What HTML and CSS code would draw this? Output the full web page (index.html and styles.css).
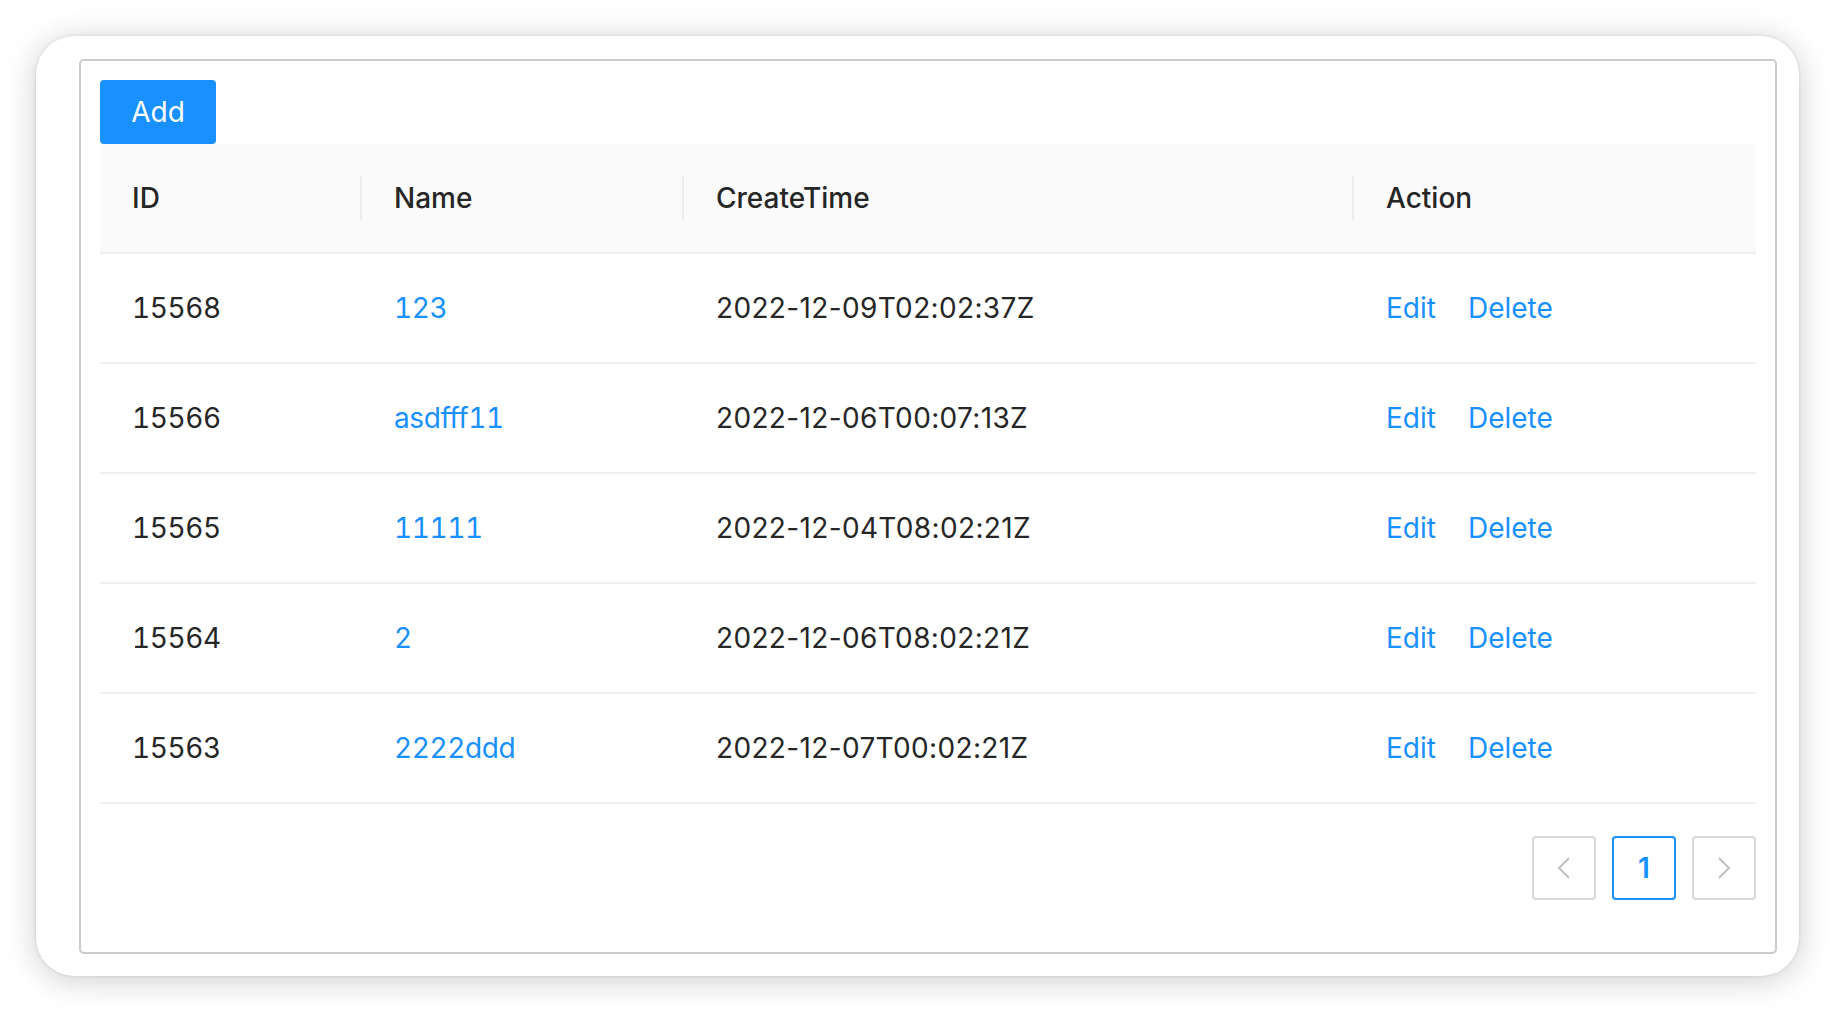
FILE: index.html
```html
<!DOCTYPE html>
<html>
<head>
<meta charset="utf-8">
<link rel="stylesheet" href="styles.css">
</head>
<body>
<div class="window">
  <div class="panel">
    <button class="btn-primary">Add</button>
    <table class="table">
      <colgroup>
        <col class="c-id"><col class="c-name"><col class="c-time"><col class="c-action">
      </colgroup>
      <thead>
        <tr><th>ID</th><th>Name</th><th>CreateTime</th><th>Action</th></tr>
      </thead>
      <tbody>
        <tr><td class="tnum">15568</td><td><a class="link tnum">123</a></td><td class="date">2022-12-09T02:02:37Z</td><td><span class="actions"><a class="link">Edit</a><a class="link">Delete</a></span></td></tr>
        <tr><td class="tnum">15566</td><td><a class="link tnum">asdfff11</a></td><td class="date">2022-12-06T00:07:13Z</td><td><span class="actions"><a class="link">Edit</a><a class="link">Delete</a></span></td></tr>
        <tr><td class="tnum">15565</td><td><a class="link tnum">11111</a></td><td class="date">2022-12-04T08:02:21Z</td><td><span class="actions"><a class="link">Edit</a><a class="link">Delete</a></span></td></tr>
        <tr><td class="tnum">15564</td><td><a class="link tnum">2</a></td><td class="date">2022-12-06T08:02:21Z</td><td><span class="actions"><a class="link">Edit</a><a class="link">Delete</a></span></td></tr>
        <tr><td class="tnum">15563</td><td><a class="link tnum">2222ddd</a></td><td class="date">2022-12-07T00:02:21Z</td><td><span class="actions"><a class="link">Edit</a><a class="link">Delete</a></span></td></tr>
      </tbody>
    </table>
    <div class="pagination">
      <span class="page-item disabled">
        <svg width="14" height="22" viewBox="0 0 14 22"><path d="M12 1 L2 11 L12 21" fill="none" stroke="#bfbfbf" stroke-width="2"/></svg>
      </span>
      <span class="page-item active">1</span>
      <span class="page-item disabled">
        <svg width="14" height="22" viewBox="0 0 14 22"><path d="M2 1 L12 11 L2 21" fill="none" stroke="#bfbfbf" stroke-width="2"/></svg>
      </span>
    </div>
  </div>
</div>
</body>
</html>
```
FILE: styles.css
```css
html, body {
  margin: 0;
  padding: 0;
  background: #ffffff;
}
body {
  font-family: Inter, "Noto Sans", "Liberation Sans", sans-serif;
  color: #262626;
  font-size: 28px;
  padding: 36px 0 36px 36px;
}
.window {
  width: 1763px;
  height: 940px;
  box-sizing: border-box;
  background: #fff;
  border-radius: 38px;
  padding: 23px 22px 23px 43px;
  box-shadow: 0 0 3px rgba(0,0,0,0.14), 0 4px 32px rgba(0,0,0,0.2);
}
.panel {
  border: 2px solid #cbcbcb;
  border-radius: 5px;
  padding: 19px;
}
.btn-primary {
  display: block;
  width: 116px;
  height: 64px;
  border: 0;
  border-radius: 4px;
  background: #1890ff;
  color: #fff;
  font-family: inherit;
  font-size: 28px;
  line-height: 44px;
  padding: 0;
}
.table {
  width: 1656px;
  table-layout: fixed;
  border-collapse: separate;
  border-spacing: 0;
}
.c-id { width: 262px; }
.c-name { width: 322px; }
.c-time { width: 670px; }
.c-action { width: 402px; }
.table th {
  position: relative;
  background: #fafafa;
  font-weight: 500;
  text-align: left;
  height: 108px;
  padding: 0 32px;
  line-height: 44px;
  border-bottom: 2px solid #f0f0f0;
}
.table th:first-child { border-top-left-radius: 4px; }
.table th:last-child { border-top-right-radius: 4px; }
.table th:not(:last-child)::before {
  content: "";
  position: absolute;
  right: 0;
  top: 32px;
  width: 2px;
  height: 44px;
  background: #ececec;
}
.table td {
  height: 108px;
  padding: 0 32px;
  line-height: 44px;
  border-bottom: 2px solid #f0f0f0;
}
.tnum {
  font-variant-numeric: tabular-nums;
  letter-spacing: -0.4px;
}
.date {
  letter-spacing: 0.35px;
}
.link {
  color: #1890ff;
  text-decoration: none;
}
.actions {
  display: inline-flex;
  gap: 32px;
}
.pagination {
  display: flex;
  justify-content: flex-end;
  gap: 16px;
  margin: 32px 0 33px;
}
.page-item {
  width: 64px;
  height: 64px;
  box-sizing: border-box;
  border: 2px solid #d9d9d9;
  border-radius: 4px;
  display: flex;
  align-items: center;
  justify-content: center;
  font-size: 28px;
}
.page-item.active {
  border-color: #1890ff;
  color: #1890ff;
  font-weight: 600;
}
```
